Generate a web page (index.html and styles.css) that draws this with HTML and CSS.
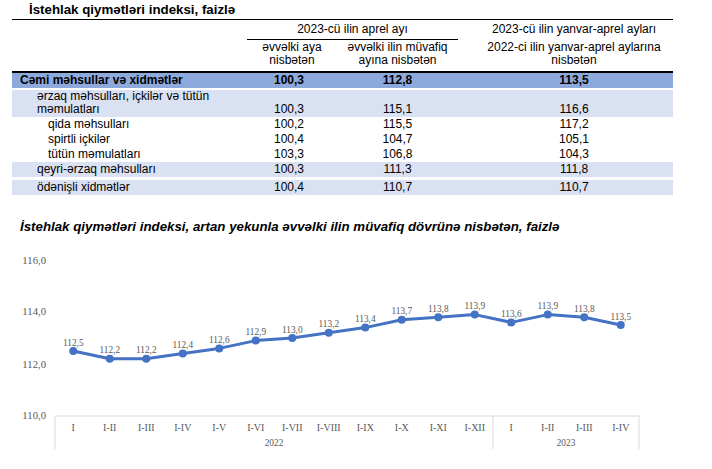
FILE: index.html
```html
<!DOCTYPE html>
<html lang="az">
<head>
<meta charset="utf-8">
<title>İstehlak qiymətləri indeksi</title>
<link rel="stylesheet" href="styles.css">
</head>
<body>
<div class="page">
  <h1 class="tbl-title">İstehlak qiymətləri indeksi, faizlə</h1>
  <table class="cpi">
    <colgroup><col class="w1"><col class="w2"><col class="w3"><col class="w4"></colgroup>
    <thead>
      <tr class="hr1">
        <th rowspan="2" class="blank"></th>
        <th colspan="2" class="grp">2023-cü ilin aprel ayı</th>
        <th class="c4">2023-cü ilin yanvar-aprel ayları</th>
      </tr>
      <tr class="hr2">
        <th class="sub">əvvəlki aya<br>nisbətən</th>
        <th class="sub">əvvəlki ilin müvafiq<br>ayına nisbətən</th>
        <th class="c4 nosub">2022-ci ilin yanvar-aprel aylarına<br>nisbətən</th>
      </tr>
    </thead>
    <tbody>
      <tr class="total">
        <td class="l0">Cəmi məhsullar və xidmətlər</td><td class="c2">100,3</td><td>112,8</td><td class="c4">113,5</td>
      </tr>
      <tr class="band gap two">
        <td class="l1">ərzaq məhsulları, içkilər və tütün<br>məmulatları</td><td class="c2">100,3</td><td>115,1</td><td class="c4">116,6</td>
      </tr>
      <tr>
        <td class="l2">qida məhsulları</td><td class="c2">100,2</td><td>115,5</td><td class="c4">117,2</td>
      </tr>
      <tr>
        <td class="l2">spirtli içkilər</td><td class="c2">100,4</td><td>104,7</td><td class="c4">105,1</td>
      </tr>
      <tr>
        <td class="l2">tütün məmulatları</td><td class="c2">103,3</td><td>106,8</td><td class="c4">104,3</td>
      </tr>
      <tr class="band">
        <td class="l1">qeyri-ərzaq məhsulları</td><td class="c2">100,3</td><td>111,3</td><td class="c4">111,8</td>
      </tr>
      <tr class="band gap3">
        <td class="l1">ödənişli xidmətlər</td><td class="c2">100,4</td><td>110,7</td><td class="c4">110,7</td>
      </tr>
    </tbody>
  </table>

  <h2 class="chart-title">İstehlak qiymətləri indeksi, artan yekunla əvvəlki ilin müvafiq dövrünə nisbətən, faizlə</h2>

  <svg class="chart" width="712" height="233" viewBox="0 236 712 233" xmlns="http://www.w3.org/2000/svg">
    <g class="yaxis">
      <text x="46" y="263.5">116,0</text>
      <text x="46" y="315.3">114,0</text>
      <text x="46" y="367.5">112,0</text>
      <text x="46" y="419.3">110,0</text>
    </g>
    <g class="axis">
      <line x1="55" y1="416" x2="639" y2="416"/>
      <line x1="55" y1="416" x2="55" y2="449"/>
      <line x1="493" y1="416" x2="493" y2="449"/>
      <line x1="639" y1="416" x2="639" y2="449"/>
    </g>
    <g class="cats">
      <text x="73.25" y="430.5">I</text>
      <text x="109.75" y="430.5">I-II</text>
      <text x="146.25" y="430.5">I-III</text>
      <text x="182.75" y="430.5">I-IV</text>
      <text x="219.25" y="430.5">I-V</text>
      <text x="255.75" y="430.5">I-VI</text>
      <text x="292.25" y="430.5">I-VII</text>
      <text x="328.75" y="430.5">I-VIII</text>
      <text x="365.25" y="430.5">I-IX</text>
      <text x="401.75" y="430.5">I-X</text>
      <text x="438.25" y="430.5">I-XI</text>
      <text x="474.75" y="430.5">I-XII</text>
      <text x="511.25" y="430.5">I</text>
      <text x="547.75" y="430.5">I-II</text>
      <text x="584.25" y="430.5">I-III</text>
      <text x="620.75" y="430.5">I-IV</text>
    </g>
    <g class="years">
      <text x="274" y="446.3">2022</text>
      <text x="566" y="446.3">2023</text>
    </g>
    <polyline class="series" points="73.25,351 109.75,358.8 146.25,358.8 182.75,353.6 219.25,348.4 255.75,340.6 292.25,338 328.75,332.8 365.25,327.6 401.75,319.8 438.25,317.2 474.75,314.6 511.25,322.4 547.75,314.6 584.25,317.2 620.75,325"/>
    <g class="dots">
      <circle cx="73.25" cy="351" r="4"/>
      <circle cx="109.75" cy="358.8" r="4"/>
      <circle cx="146.25" cy="358.8" r="4"/>
      <circle cx="182.75" cy="353.6" r="4"/>
      <circle cx="219.25" cy="348.4" r="4"/>
      <circle cx="255.75" cy="340.6" r="4"/>
      <circle cx="292.25" cy="338" r="4"/>
      <circle cx="328.75" cy="332.8" r="4"/>
      <circle cx="365.25" cy="327.6" r="4"/>
      <circle cx="401.75" cy="319.8" r="4"/>
      <circle cx="438.25" cy="317.2" r="4"/>
      <circle cx="474.75" cy="314.6" r="4"/>
      <circle cx="511.25" cy="322.4" r="4"/>
      <circle cx="547.75" cy="314.6" r="4"/>
      <circle cx="584.25" cy="317.2" r="4"/>
      <circle cx="620.75" cy="325" r="4"/>
    </g>
    <g class="vals">
      <text x="73.25" y="345.5">112,5</text>
      <text x="109.75" y="353.3">112,2</text>
      <text x="146.25" y="353.3">112,2</text>
      <text x="182.75" y="348.1">112,4</text>
      <text x="219.25" y="342.9">112,6</text>
      <text x="255.75" y="335.1">112,9</text>
      <text x="292.25" y="332.5">113,0</text>
      <text x="328.75" y="327.3">113,2</text>
      <text x="365.25" y="322.1">113,4</text>
      <text x="401.75" y="314.3">113,7</text>
      <text x="438.25" y="311.7">113,8</text>
      <text x="474.75" y="309.1">113,9</text>
      <text x="511.25" y="316.9">113,6</text>
      <text x="547.75" y="309.1">113,9</text>
      <text x="584.25" y="311.7">113,8</text>
      <text x="620.75" y="319.5">113,5</text>
    </g>
  </svg>
</div>
</body>
</html>
```
FILE: styles.css
```css
html, body {
  margin: 0;
  padding: 0;
  background: #fff;
}
body {
  font-family: "Liberation Sans", Arial, sans-serif;
  color: #000;
}
.page {
  width: 712px;
  height: 469px;
  overflow: hidden;
}
.tbl-title {
  margin: 0;
  padding-left: 29px;
  font-size: 13.3px;
  font-weight: bold;
  line-height: 19px;
}
.cpi {
  margin-left: 12px;
  width: 661px;
  table-layout: fixed;
  border-collapse: separate;
  border-spacing: 0;
  font-size: 12px;
}
.cpi .w1 { width: 235px; }
.cpi .w2 { width: 90px; }
.cpi .w3 { width: 121px; }
.cpi .w4 { width: 215px; }

.cpi th {
  font-weight: normal;
  text-align: center;
  line-height: 13px;
  padding: 0;
}
.hr1 th {
  border-top: 1px solid #000;
  padding: 3px 0 3px;
  vertical-align: top;
}
.hr1 th.blank {
  border-bottom: 2px solid #000;
}
.hr2 th {
  border-top: 1px solid #000;
  border-bottom: 2px solid #000;
  padding: 1px 0 4px;
  vertical-align: top;
}
.hr2 th.nosub {
  border-top-color: #fff;
}
.cpi th.c4,
.cpi td.c4 {
  padding-left: 17px;
}

.cpi td {
  padding: 0;
  line-height: 15px;
  text-align: center;
  vertical-align: bottom;
  white-space: nowrap;
}
.cpi td.c2 { padding-right: 6px; }
.cpi td.l0 { text-align: left; padding-left: 8px; }
.cpi td.l1 { text-align: left; padding-left: 25px; }
.cpi td.l2 { text-align: left; padding-left: 36px; }

.total td {
  background: #8ea9db;
  font-weight: bold;
  line-height: 15px;
}
.band td {
  background: #d9e1f2;
}
.gap td {
  border-top: 2px solid #fff;
}
.gap3 td {
  border-top: 3px solid #fff;
}
.two td {
  line-height: 13px;
  padding-bottom: 1px;
}

.chart-title {
  margin: 23px 0 0 20px;
  font-size: 13.3px;
  font-weight: bold;
  font-style: italic;
  line-height: 18px;
}
.chart {
  display: block;
}
.chart text {
  font-family: "Liberation Serif", "Times New Roman", serif;
  fill: #595959;
}
.yaxis text {
  font-size: 10.7px;
  text-anchor: end;
}
.cats text {
  font-size: 10px;
  text-anchor: middle;
}
.years text {
  font-size: 9.3px;
  text-anchor: middle;
}
.vals text {
  font-size: 9.3px;
  text-anchor: middle;
}
.axis line {
  stroke: #d9d9d9;
  stroke-width: 1;
}
.series {
  fill: none;
  stroke: #4472c4;
  stroke-width: 3;
  stroke-linejoin: round;
}
.dots circle {
  fill: #4472c4;
}
```
